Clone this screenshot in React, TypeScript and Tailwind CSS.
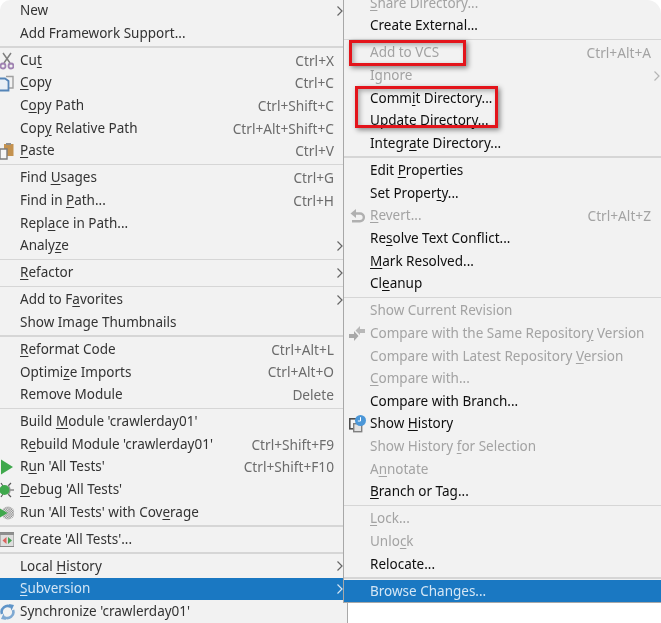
import React from "react";

type Item = { t?: string; u?: number; s?: string; d?: boolean; a?: boolean; h?: boolean; i?: string; sep?: boolean };

const Cut = () => (
  <svg width="14" height="18" viewBox="0 0 14 18" fill="none">
    <path d="M4 11 L11 1 M10 11 L3 1" stroke="#808080" strokeWidth="1.5" />
    <circle cx="3" cy="14" r="2.5" stroke="#a083b2" strokeWidth="1.8" />
    <circle cx="11" cy="14" r="2.5" stroke="#a083b2" strokeWidth="1.8" />
  </svg>
);
const Copy = () => (
  <svg width="14" height="17" viewBox="0 0 14 17" fill="none">
    <path d="M6 1.5 H13 V13 H9" stroke="#a0a0a0" strokeWidth="1.4" />
    <path d="M-1 3.5 H5 L8.5 6 V15.5 H-1 Z" fill="#e8eff6" stroke="#5585b8" strokeWidth="1.8" />
  </svg>
);
const Paste = () => (
  <svg width="14" height="18" viewBox="0 0 14 18" fill="none">
    <path d="M4 2 H13.5 V14 H7 V7 H4 Z" fill="#c4924f" />
    <path d="M6 1 H11 V3 H6 Z" fill="#8f8f8f" />
    <path d="M0 7 H7 V17 H0 Z" fill="#f6f6f6" stroke="#7d7d7d" strokeWidth="1.4" />
  </svg>
);
const Run = () => (
  <svg width="14" height="16" viewBox="0 0 14 16">
    <path d="M1 0.5 L13 8 L1 15.5 Z" fill="#3fa84c" />
  </svg>
);
const Debug = () => (
  <svg width="14" height="16" viewBox="0 0 14 16" fill="none">
    <path d="M8 4 L11 1 M9 8 H14 M8 12 L11 15 M1 1 L3 4 M1 15 L3 12" stroke="#555" strokeWidth="1.2" />
    <path d="M8 4 A5 5 0 0 1 8 12" stroke="#9a9a9a" strokeWidth="1.6" />
    <circle cx="4.5" cy="8" r="5" fill="#3fa84c" />
  </svg>
);
const Coverage = () => (
  <svg width="14" height="16" viewBox="0 0 14 16">
    <defs>
      <pattern id="chk" width="2.4" height="2.4" patternUnits="userSpaceOnUse">
        <rect width="1.2" height="1.2" fill="#808080" />
        <rect x="1.2" y="1.2" width="1.2" height="1.2" fill="#808080" />
      </pattern>
    </defs>
    <circle cx="8" cy="8" r="6.5" fill="url(#chk)" />
    <path d="M0 3.5 L7.5 8 L0 12.5 Z" fill="#3fa84c" />
  </svg>
);
const Create = () => (
  <svg width="14" height="15" viewBox="0 0 14 15">
    <rect x="0" y="0.5" width="14" height="14" fill="#dedede" stroke="#858585" />
    <rect x="0" y="0.5" width="14" height="2.5" fill="#8f8f8f" />
    <path d="M6.5 5 L2.5 8.5 L6.5 12 Z" fill="#d9645e" />
    <path d="M8 5 L12 8.5 L8 12 Z" fill="#47a254" />
  </svg>
);
const Sync = () => (
  <svg width="15" height="16" viewBox="0 0 15 16" fill="none">
    <path d="M2 10 A6 6 0 0 1 11 3" stroke="#5f94c8" strokeWidth="2.6" />
    <path d="M9 0 L14 1 L11.5 6.5 Z" fill="#5f94c8" />
    <path d="M13 6 A6 6 0 0 1 4 13" stroke="#7fa9d2" strokeWidth="2.6" />
    <path d="M6 16 L1 15 L3.5 9.5 Z" fill="#7fa9d2" />
  </svg>
);
const Revert = () => (
  <svg width="15" height="14" viewBox="0 0 15 14" fill="none">
    <path d="M3 4.5 H10 A3.8 3.8 0 0 1 10 12.2 H2" stroke="#b0b0b0" strokeWidth="2.4" />
    <path d="M6 0 V9 L0.5 4.5 Z" fill="#b0b0b0" />
  </svg>
);
const Compare = () => (
  <svg width="16" height="15" viewBox="0 0 16 15">
    <path d="M0 8 H5 V5 L9.5 10 L5 15 V12 H0 Z" fill="#a8a8a8" />
    <path d="M16 3 H11 V0 L6.5 4.5 L11 9 V7 H16 Z" fill="#b8b8b8" />
  </svg>
);
const History = () => (
  <svg width="17" height="18" viewBox="0 0 17 18" fill="none">
    <rect x="0.8" y="3.8" width="10" height="10" fill="#f5f5f5" stroke="#4f4f4f" strokeWidth="1.6" />
    <rect x="4.7" y="8.7" width="8" height="8" fill="#e2e2e2" stroke="#808080" strokeWidth="1.4" />
    <circle cx="11.5" cy="5.5" r="5.5" fill="#4b97d8" />
    <path d="M11.5 2.2 V6 H8.8" stroke="#fff" strokeWidth="1" />
  </svg>
);

const icons: Record<string, React.ReactNode> = {
  cut: <Cut />,
  copy: <Copy />,
  paste: <Paste />,
  run: <Run />,
  debug: <Debug />,
  cov: <Coverage />,
  create: <Create />,
  sync: <Sync />,
  revert: <Revert />,
  compare: <Compare />,
  history: <History />,
};

const left: Item[] = [
  { t: "New", a: true },
  { t: "Add Framework Support..." },
  { sep: true },
  { t: "Cut", u: 2, s: "Ctrl+X", i: "cut" },
  { t: "Copy", u: 0, s: "Ctrl+C", i: "copy" },
  { t: "Copy Path", u: 1, s: "Ctrl+Shift+C" },
  { t: "Copy Relative Path", u: 3, s: "Ctrl+Alt+Shift+C" },
  { t: "Paste", u: 0, s: "Ctrl+V", i: "paste" },
  { sep: true },
  { t: "Find Usages", u: 5, s: "Ctrl+G" },
  { t: "Find in Path...", u: 8, s: "Ctrl+H" },
  { t: "Replace in Path...", u: 4 },
  { t: "Analyze", u: 5, a: true },
  { sep: true },
  { t: "Refactor", u: 0, a: true },
  { sep: true },
  { t: "Add to Favorites", u: 8, a: true },
  { t: "Show Image Thumbnails" },
  { sep: true },
  { t: "Reformat Code", u: 0, s: "Ctrl+Alt+L" },
  { t: "Optimize Imports", u: 6, s: "Ctrl+Alt+O" },
  { t: "Remove Module", s: "Delete" },
  { sep: true },
  { t: "Build Module 'crawlerday01'", u: 6 },
  { t: "Rebuild Module 'crawlerday01'", u: 1, s: "Ctrl+Shift+F9" },
  { t: "Run 'All Tests'", u: 1, s: "Ctrl+Shift+F10", i: "run" },
  { t: "Debug 'All Tests'", u: 0, i: "debug" },
  { t: "Run 'All Tests' with Coverage", u: 24, i: "cov" },
  { sep: true },
  { t: "Create 'All Tests'...", i: "create" },
  { sep: true },
  { t: "Local History", u: 6, a: true },
  { t: "Subversion", u: 0, a: true, h: true },
  { t: "Synchronize 'crawlerday01'", i: "sync" },
];

const right: Item[] = [
  { t: "Share Directory...", u: 0, d: true },
  { t: "Create External..." },
  { sep: true },
  { t: "Add to VCS", d: true, s: "Ctrl+Alt+A" },
  { t: "Ignore", d: true, a: true },
  { t: "Commit Directory...", u: 4 },
  { t: "Update Directory...", u: 0 },
  { t: "Integrate Directory...", u: 6 },
  { sep: true },
  { t: "Edit Properties", u: 5 },
  { t: "Set Property...", u: 10 },
  { t: "Revert...", u: 0, d: true, s: "Ctrl+Alt+Z", i: "revert" },
  { t: "Resolve Text Conflict...", u: 2 },
  { t: "Mark Resolved...", u: 0 },
  { t: "Cleanup", u: 2 },
  { sep: true },
  { t: "Show Current Revision", d: true },
  { t: "Compare with the Same Repository Version", u: 31, d: true, i: "compare" },
  { t: "Compare with Latest Repository Version", u: 31, d: true },
  { t: "Compare with...", u: 0, d: true },
  { t: "Compare with Branch..." },
  { t: "Show History", u: 5, i: "history" },
  { t: "Show History for Selection", u: 13, d: true },
  { t: "Annotate", u: 1, d: true },
  { t: "Branch or Tag...", u: 0 },
  { sep: true },
  { t: "Lock...", u: 0, d: true },
  { t: "Unlock", u: 4, d: true },
  { t: "Relocate..." },
  { sep: true },
  { t: "Browse Changes...", h: true },
];

function Label({ t, u }: { t: string; u?: number }) {
  if (u === undefined) return <span className="whitespace-pre">{t}</span>;
  return (
    <span className="whitespace-pre">
      {t.slice(0, u)}
      <u className="underline-offset-2">{t[u]}</u>
      {t.slice(u + 1)}
    </span>
  );
}

function Arrow({ color }: { color: string }) {
  return (
    <svg width="6" height="10" viewBox="0 0 6 10" fill="none" className="ml-[3px]">
      <path d="M0.5 0.5 L5 5 L0.5 9.5" stroke={color} strokeWidth="1.2" />
    </svg>
  );
}

function Row({ item, side }: { item: Item; side: "l" | "r" }) {
  const base = side === "l" ? "text-[#333333]" : "text-[#0f0f0f]";
  const textColor = item.h ? "text-[#d4e6f5]" : item.d ? "text-[#a3a3a3]" : base;
  return (
    <div className={`flex h-[22.67px] items-center ${item.h ? "bg-[#1a78c2]" : ""} ${textColor}`}>
      <div className={`flex shrink-0 items-center ${side === "l" ? "w-[20px] justify-start" : "w-[26px] justify-center"}`}>
        {item.i ? icons[item.i] : null}
      </div>
      <div className="min-w-0 flex-1">
        <Label t={item.t!} u={item.u} />
      </div>
      {item.s ? <span className={`text-[13.7px] ${item.d ? "text-[#a3a3a3]" : "text-[#6c6c6c]"}`}>{item.s}</span> : null}
      <div className={`flex shrink-0 items-center ${side === "l" ? "w-[13px]" : "w-[10px]"}`}>
        {item.a ? <Arrow color={item.h ? "#d4e6f5" : item.d ? "#b5b5b5" : "#666666"} /> : null}
      </div>
    </div>
  );
}

function Menu({ items, side }: { items: Item[]; side: "l" | "r" }) {
  return (
    <>
      {items.map((it, i) =>
        it.sep ? (
          <div key={i} className="flex h-[4.3px] items-center">
            <div className="h-[1.5px] w-full bg-[#d6d6d6]" />
          </div>
        ) : (
          <Row key={i} item={it} side={side} />
        ),
      )}
    </>
  );
}

export default function App() {
  return (
    <div
      className="relative h-[623px] w-[661px] overflow-hidden bg-white text-[13.5px] leading-none blur-[0.4px]"
      style={{ fontFamily: '"Noto Sans", "Open Sans", sans-serif' }}
    >
      <div className="h-[640px] w-[348px] overflow-hidden rounded-tl-[10px] border-r border-[#a8a8a8] bg-[#f2f2f2]">
        <div className="-mt-[0.4px]">
          <Menu items={left} side="l" />
        </div>
      </div>

      <div className="absolute left-[343px] top-0 h-[603px] w-[318px] overflow-hidden rounded-tr-[14px] border-b border-l border-[#a8a8a8] bg-[#f2f2f2]">
        <div className="-mt-[7.8px]">
          <Menu items={right} side="r" />
        </div>
      </div>

      <div className="absolute left-[349px] top-[40px] h-[26px] w-[117px] border-[3px] border-[#e3141b] shadow-[2px_2px_5px_rgba(0,0,0,0.45),inset_2px_2px_5px_rgba(0,0,0,0.3)]" />
      <div className="absolute left-[355px] top-[86px] h-[42px] w-[143px] border-[3px] border-[#e3141b] shadow-[2px_2px_5px_rgba(0,0,0,0.45),inset_2px_2px_5px_rgba(0,0,0,0.3)]" />
    </div>
  );
}
